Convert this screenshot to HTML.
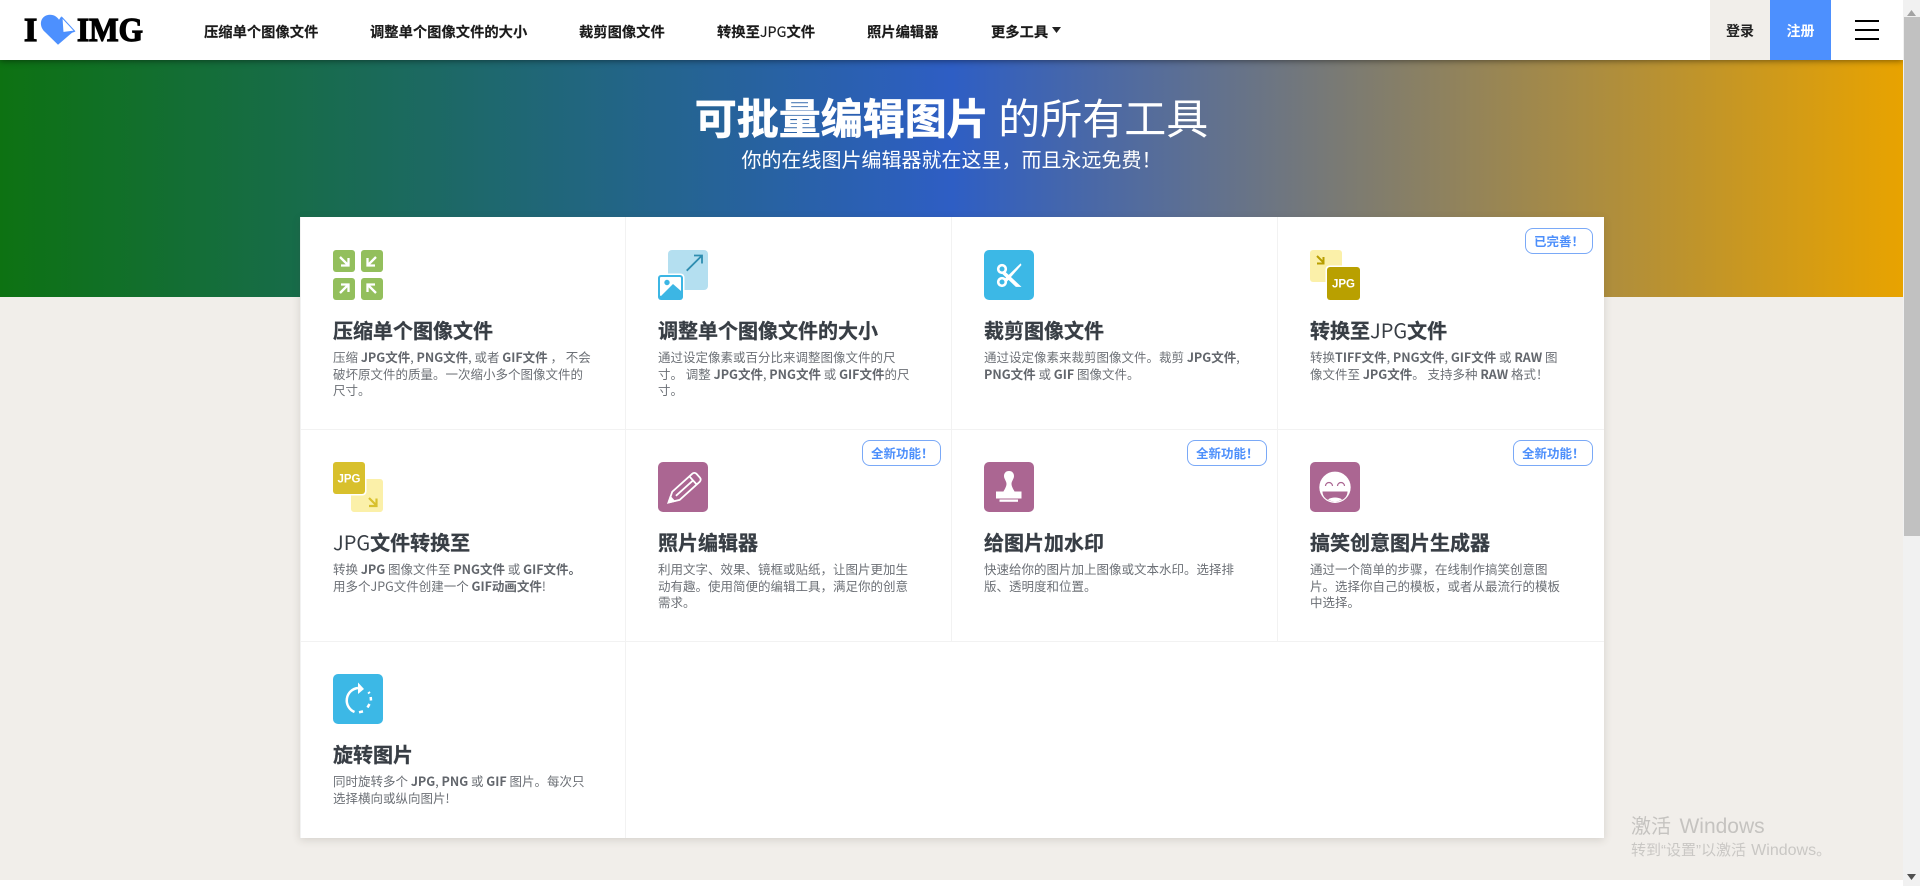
<!DOCTYPE html>
<html lang="zh-CN">
<head>
<meta charset="utf-8">
<title>iLoveIMG</title>
<style>
*{box-sizing:border-box;margin:0;padding:0}
html,body{width:1920px;height:886px;overflow:hidden;background:#fff}
body{position:relative;font-family:"Noto Sans CJK SC","Liberation Sans",sans-serif}
.abs,.nav,.ttl,.desc,.badge,.ico,.ln{position:absolute}
#bg{left:0;top:0;width:1903px;height:880px;background:#f1eeea}
#hero{left:0;top:60px;width:1903px;height:237px;background:linear-gradient(90deg,#0d7212 0%,#2e5ec4 50%,#e8a300 100%)}
#hdr{left:0;top:0;width:1903px;height:60px;background:#fff;box-shadow:0 1px 6px rgba(0,0,0,.45)}
.nav{top:21px;height:22px;line-height:22px;font-size:14.3px;font-weight:700;color:#1a1a1a;white-space:nowrap;-webkit-text-stroke:.15px #1a1a1a}
.nav i{font-style:normal;font-weight:400}
#card{left:300px;top:217px;width:1304px;height:621px;background:#fff;box-shadow:0 2px 8px rgba(70,60,50,.16)}
.ln{background:#f2f2f2}
.ttl{font-size:20px;line-height:28px;font-weight:700;color:#383e45;white-space:nowrap;-webkit-text-stroke:.3px #383e45}
.ttl i{font-style:normal;font-weight:400;-webkit-text-stroke:0}
.desc{font-size:12.5px;line-height:16.5px;color:#6c7076;white-space:nowrap}
.desc b{font-weight:700;color:#62666c}
.badge{height:26px;line-height:24px;border:1px solid #7aa9f7;border-radius:8px;background:#fff;color:#4d8ffb;font-size:12.5px;font-weight:700;white-space:nowrap;padding-left:8px;text-align:left}
.ico{width:50px;height:50px;overflow:visible}
</style>
</head>
<body>
<div class="abs" id="bg"></div>
<div class="abs" id="hero"></div>
<div class="abs" id="hdr"></div>

<svg class="abs" style="left:0;top:0;width:170px;height:60px" viewBox="0 0 170 60">
  <text x="24" y="41" font-family="Liberation Serif" font-weight="700" font-size="34" fill="#000" stroke="#000" stroke-width="1.300">I</text>
  <path d="M58 44.700L45 32C37.500 25 41 14.700 50 14.700c4 0 7 2 9 5l2-3 14 15-3 1z" fill="#4d90fe"/>
  <path d="M62 17.500l12.500 13.500-11.500 1.500z" fill="#fff" stroke="#4d90fe" stroke-width="1"/>
  <text x="77" y="41" font-family="Liberation Serif" font-weight="700" font-size="34" fill="#000" stroke="#000" stroke-width="1.300" textLength="66" lengthAdjust="spacingAndGlyphs">IMG</text>
</svg>

<div class="nav" style="left:204px">压缩单个图像文件</div>
<div class="nav" style="left:370px">调整单个图像文件的大小</div>
<div class="nav" style="left:579px">裁剪图像文件</div>
<div class="nav" style="left:717px">转换至<i>JPG</i>文件</div>
<div class="nav" style="left:867px">照片编辑器</div>
<div class="nav" style="left:991px">更多工具</div>
<svg class="abs" style="left:1052px;top:27px;width:9px;height:7px" viewBox="0 0 9 7"><path d="M0 0h9L4.500 6z" fill="#222"/></svg>

<div class="abs" style="left:1710px;top:1px;width:60px;height:59px;background:#f1eeea;color:#222;font-size:14px;font-weight:700;line-height:60px;text-align:center">登录</div>
<div class="abs" style="left:1710px;top:0;width:60px;height:1px;background:#f1eeea"></div>
<div class="abs" style="left:1770px;top:0;width:61px;height:60px;background:#4d90fe;color:#fff;font-size:14px;font-weight:700;line-height:62px;text-align:center">注册</div>
<div class="abs" style="left:1855px;top:20px;width:24px;height:2px;background:#000"></div>
<div class="abs" style="left:1855px;top:29px;width:24px;height:2px;background:#000"></div>
<div class="abs" style="left:1855px;top:38px;width:24px;height:2px;background:#000"></div>

<div class="abs" style="left:0;top:87px;width:1903px;text-align:center;color:#fff;font-size:42px;line-height:60px;white-space:nowrap"><b style="-webkit-text-stroke:.6px #fff">可批量编辑图片</b> 的所有工具</div>
<div class="abs" style="left:0;top:145px;width:1903px;text-align:center;color:#fff;font-size:20px;line-height:28px;white-space:nowrap">你的在线图片编辑器就在这里，而且永远免费！</div>

<div class="abs" id="card"></div>
<div class="ln" style="left:300px;top:217px;width:1px;height:621px"></div>
<div class="ln" style="left:625px;top:217px;width:1px;height:621px"></div>
<div class="ln" style="left:951px;top:217px;width:1px;height:424px"></div>
<div class="ln" style="left:1277px;top:217px;width:1px;height:424px"></div>
<div class="ln" style="left:300px;top:429px;width:1304px;height:1px"></div>
<div class="ln" style="left:300px;top:641px;width:1304px;height:1px"></div>

<!-- compress -->
<svg class="ico" style="left:333px;top:250px" viewBox="0 0 50 50">
  <g fill="#93bf5c"><rect width="22" height="22" rx="3"/><rect x="28" width="22" height="22" rx="3"/><rect y="28" width="22" height="22" rx="3"/><rect x="28" y="28" width="22" height="22" rx="3"/></g>
  <g fill="none" stroke="#fff" stroke-width="2.300">
    <path d="M7 7l8 8M8 15.500h7.500V8"/>
    <path d="M43 7l-8 8M42 15.500h-7.500V8"/>
    <path d="M7 43l8-8M8 34.500h7.500V42"/>
    <path d="M43 43l-8-8M42 34.500h-7.500V42"/>
  </g>
</svg>
<div class="ttl" style="left:333px;top:316px">压缩单个图像文件</div>
<div class="desc" style="left:333px;top:349px">压缩 <b>JPG文件</b>, <b>PNG文件</b>, 或者 <b>GIF文件</b> ， 不会<br>破坏原文件的质量。一次缩小多个图像文件的<br>尺寸。</div>

<!-- resize -->
<svg class="ico" style="left:658px;top:250px" viewBox="0 0 50 50">
  <rect x="10" width="40" height="40" rx="4" fill="#b4dff0"/>
  <path d="M28.700 20.700L43.500 6M36 5.500h8v8" fill="none" stroke="#2e8db0" stroke-width="1.800"/>
  <rect x="-1.500" y="23.500" width="28" height="28" rx="4" fill="#fff"/>
  <rect x="0" y="25" width="25" height="25" rx="3" fill="#3cb6e4"/>
  <rect x="2" y="27" width="21" height="19" rx="1" fill="#fff"/>
  <circle cx="9" cy="32.500" r="2.700" fill="#3cb6e4"/>
  <path d="M2 47L15 34l8 7v6z" fill="#3cb6e4"/>
</svg>
<div class="ttl" style="left:658px;top:316px">调整单个图像文件的大小</div>
<div class="desc" style="left:658px;top:349px">通过设定像素或百分比来调整图像文件的尺<br>寸。 调整 <b>JPG文件</b>, <b>PNG文件</b> 或 <b>GIF文件</b>的尺<br>寸。</div>

<!-- crop -->
<svg class="ico" style="left:984px;top:250px" viewBox="0 0 50 50">
  <rect width="50" height="50" rx="5" fill="#3cb8e6"/>
  <g fill="none" stroke="#fff" stroke-width="2.600"><circle cx="18" cy="19" r="3.800"/><circle cx="18" cy="32" r="3.800"/></g>
  <path d="M20.500 21.500L36.500 36.500 32 36.500 19 24zM20.500 29.500L36.500 14 37 15 23 31z" fill="#fff" stroke="#fff" stroke-width=".8"/>
</svg>
<div class="ttl" style="left:984px;top:316px">裁剪图像文件</div>
<div class="desc" style="left:984px;top:349px">通过设定像素来裁剪图像文件。裁剪 <b>JPG文件</b>,<br><b>PNG文件</b> 或 <b>GIF</b> 图像文件。</div>

<!-- to jpg -->
<svg class="ico" style="left:1310px;top:250px" viewBox="0 0 50 50">
  <rect width="32" height="32" rx="3" fill="#fbf0a9"/>
  <path d="M7 6l6.500 6.500M7 13.500h6.500V7" fill="none" stroke="#b89e00" stroke-width="2"/>
  <rect x="15.500" y="15.500" width="35" height="35" rx="4" fill="#fff"/>
  <rect x="17" y="17" width="33" height="33" rx="3" fill="#b9a000"/>
  <text x="33.500" y="37.500" text-anchor="middle" font-family="Liberation Sans" font-weight="700" font-size="11.500" fill="#fff">JPG</text>
</svg>
<div class="ttl" style="left:1310px;top:316px">转换至<i>JPG</i>文件</div>
<div class="desc" style="left:1310px;top:349px">转换<b>TIFF文件</b>, <b>PNG文件</b>, <b>GIF文件</b> 或 <b>RAW</b> 图<br>像文件至 <b>JPG文件</b>。 支持多种 <b>RAW</b> 格式！</div>
<div class="badge" style="left:1525px;top:228px;width:68px">已完善！</div>

<!-- from jpg -->
<svg class="ico" style="left:333px;top:462px" viewBox="0 0 50 50">
  <rect x="18" y="17" width="32" height="33" rx="3" fill="#fbf0a9"/>
  <path d="M36 36l7.500 7.500M36 44h7.500v-7.500" fill="none" stroke="#d8c02c" stroke-width="2.200"/>
  <rect x="-1" y="-1" width="34.500" height="34.500" rx="4" fill="#fff"/>
  <rect width="32" height="32" rx="3" fill="#d8c02c"/>
  <text x="16" y="20.500" text-anchor="middle" font-family="Liberation Sans" font-weight="700" font-size="11.500" fill="#fff">JPG</text>
</svg>
<div class="ttl" style="left:333px;top:528px"><i>JPG</i>文件转换至</div>
<div class="desc" style="left:333px;top:561px">转换 <b>JPG</b> 图像文件至 <b>PNG文件</b> 或 <b>GIF文件。</b><br>用多个JPG文件创建一个 <b>GIF动画文件</b>!</div>

<!-- editor -->
<svg class="ico" style="left:658px;top:462px" viewBox="0 0 50 50">
  <rect width="50" height="50" rx="5" fill="#ab6692"/>
  <g transform="translate(10.500 40.500) rotate(-42)" fill="none" stroke="#fff" stroke-width="1.800">
    <path d="M0 0L10-5.500H37a3 3 0 0 1 3 3v5a3 3 0 0 1-3 3H10z"/>
    <path d="M33-5.500v11M10 0h23"/>
    <path d="M0 0L5-2.700v5.400z" fill="#fff"/>
  </g>
</svg>
<div class="ttl" style="left:658px;top:528px">照片编辑器</div>
<div class="desc" style="left:658px;top:561px">利用文字、效果、镜框或贴纸，让图片更加生<br>动有趣。使用简便的编辑工具，满足你的创意<br>需求。</div>
<div class="badge" style="left:862px;top:440px;width:79px">全新功能！</div>

<!-- watermark -->
<svg class="ico" style="left:984px;top:462px" viewBox="0 0 50 50">
  <rect width="50" height="50" rx="5" fill="#ab6692"/>
  <g fill="#fff">
    <path d="M25 9c-3.500 0-5 2.500-5 5 0 3 2.500 5 2.500 8 0 3-3 7-3 7.500h11c0-.5-3-4.500-3-7.500 0-3 2.500-5 2.500-8 0-2.500-1.500-5-5-5z"/>
    <rect x="12" y="29.500" width="25.500" height="7"/>
    <rect x="15.500" y="37.500" width="18.500" height="2.300"/>
  </g>
</svg>
<div class="ttl" style="left:984px;top:528px">给图片加水印</div>
<div class="desc" style="left:984px;top:561px">快速给你的图片加上图像或文本水印。选择排<br>版、透明度和位置。</div>
<div class="badge" style="left:1187px;top:440px;width:80px">全新功能！</div>

<!-- meme -->
<svg class="ico" style="left:1310px;top:462px" viewBox="0 0 50 50">
  <rect width="50" height="50" rx="5" fill="#ab6692"/>
  <circle cx="25" cy="25.300" r="15.700" fill="#fff"/>
  <path d="M15.500 24a3.500 3.500 0 0 1 7 0M27.500 24a3.500 3.500 0 0 1 7 0" fill="none" stroke="#ab6692" stroke-width="1.200"/>
  <path d="M12.500 29.500H37.500C37.500 36 31.500 39.500 25 39.500S12.500 36 12.500 29.500z" fill="#ab6692"/>
  <path d="M18 37.500c2-1.500 4.500-2 7-2s5 .5 7 2c-2 1.400-4.500 2-7 2s-5-.6-7-2z" fill="#fff"/>
</svg>
<div class="ttl" style="left:1310px;top:528px">搞笑创意图片生成器</div>
<div class="desc" style="left:1310px;top:561px">通过一个简单的步骤，在线制作搞笑创意图<br>片。选择你自己的模板，或者从最流行的模板<br>中选择。</div>
<div class="badge" style="left:1513px;top:440px;width:80px">全新功能！</div>

<!-- rotate -->
<svg class="ico" style="left:333px;top:674px" viewBox="0 0 50 50">
  <rect width="50" height="50" rx="5" fill="#3cb8e6"/>
  <g fill="none" stroke="#fff" stroke-width="2.500">
    <path d="M25 14A12.500 12.500 0 0 0 21.500 38"/>
    <path d="M26 38.300l4-.9M34.500 33.500l2-3.500M38 26.500l-.3-3.500M36.500 19.500l-1-1.500"/>
  </g>
  <path d="M25 8.500l6 6.500-6 5z" fill="#fff"/>
</svg>
<div class="ttl" style="left:333px;top:740px">旋转图片</div>
<div class="desc" style="left:333px;top:773px">同时旋转多个 <b>JPG</b>, <b>PNG</b> 或 <b>GIF</b> 图片。每次只<br>选择横向或纵向图片!</div>

<!-- windows watermark -->
<div class="abs" style="left:1631px;top:811px;height:32px;line-height:32px;color:#c5c3c0;white-space:nowrap;font-family:'Liberation Sans','Noto Sans CJK SC',sans-serif"><span style="font-size:20px">激活</span> <span style="font-size:21px;margin-left:4px">Windows</span></div>
<div class="abs" style="left:1631px;top:840px;height:22px;line-height:22px;color:#c9c7c4;white-space:nowrap;font-size:15px;font-family:'Liberation Sans','Noto Sans CJK SC',sans-serif">转到“设置”以激活 <span style="font-size:16px;margin-left:1px">Windows</span>。</div>

<!-- scrollbar -->
<div class="abs" style="left:1903px;top:0;width:17px;height:886px;background:#f1f1f1"></div>
<div class="abs" style="left:1904px;top:17px;width:16px;height:519px;background:#c1c1c1"></div>
<svg class="abs" style="left:1907px;top:10px;width:9px;height:6px" viewBox="0 0 9 6"><path d="M4.500 0L9 6H0z" fill="#a3a3a3"/></svg>
<svg class="abs" style="left:1907px;top:874px;width:9px;height:6px" viewBox="0 0 9 6"><path d="M0 0h9L4.500 6z" fill="#505050"/></svg>
</body>
</html>
